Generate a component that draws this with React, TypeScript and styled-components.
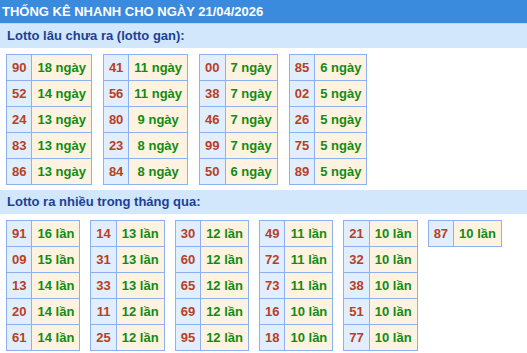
import React from "react";
import styled, { createGlobalStyle } from "styled-components";

type Pair = [string, string];

const ganTables: Pair[][] = [
  [["90", "18 ngày"], ["52", "14 ngày"], ["24", "13 ngày"], ["83", "13 ngày"], ["86", "13 ngày"]],
  [["41", "11 ngày"], ["56", "11 ngày"], ["80", "9 ngày"], ["23", "8 ngày"], ["84", "8 ngày"]],
  [["00", "7 ngày"], ["38", "7 ngày"], ["46", "7 ngày"], ["99", "7 ngày"], ["50", "6 ngày"]],
  [["85", "6 ngày"], ["02", "5 ngày"], ["26", "5 ngày"], ["75", "5 ngày"], ["89", "5 ngày"]],
];

const hotTables: Pair[][] = [
  [["91", "16 lần"], ["09", "15 lần"], ["13", "14 lần"], ["20", "14 lần"], ["61", "14 lần"]],
  [["14", "13 lần"], ["31", "13 lần"], ["33", "13 lần"], ["11", "12 lần"], ["25", "12 lần"]],
  [["30", "12 lần"], ["60", "12 lần"], ["65", "12 lần"], ["69", "12 lần"], ["95", "12 lần"]],
  [["49", "11 lần"], ["72", "11 lần"], ["73", "11 lần"], ["16", "10 lần"], ["18", "10 lần"]],
  [["21", "10 lần"], ["32", "10 lần"], ["38", "10 lần"], ["51", "10 lần"], ["77", "10 lần"]],
  [["87", "10 lần"]],
];

const GlobalStyle = createGlobalStyle`
  body {
    margin: 0;
    background: #ffffff;
    font-family: "Liberation Sans", Arial, sans-serif;
  }
`;

const Wrapper = styled.div`
  width: 527px;
  font-size: 13px;
  font-weight: bold;
`;

const TitleBar = styled.div`
  height: 23px;
  line-height: 23px;
  padding-left: 2px;
  background-color: #3a8bdd;
  color: #ffffff;
  border-bottom: 1px solid #c0d6ec;
  white-space: nowrap;
  overflow: hidden;
`;

const SectionTitle = styled.div`
  height: 24px;
  line-height: 24px;
  padding-left: 7px;
  background-color: #d3e7fc;
  color: #1a4196;
`;

const TableRow = styled.div<{ $gap: number; $last?: boolean }>`
  display: flex;
  align-items: flex-start;
  gap: ${(p) => p.$gap}px;
  padding: 6px 0 0 6px;
  margin-bottom: ${(p) => (p.$last ? "0" : "5px")};
`;

const Table = styled.table`
  border-collapse: collapse;
`;

const NumCell = styled.td`
  height: 25px;
  padding: 0 5px;
  text-align: center;
  border: 1px solid #8cb0f0;
  background-color: #e1eefe;
  color: #b7401f;
`;

const CountCell = styled.td`
  height: 25px;
  padding: 0 5px;
  text-align: center;
  border: 1px solid #8cb0f0;
  background-color: #fef3e1;
  color: #138a13;
  white-space: nowrap;
`;

const StatTable: React.FC<{ rows: Pair[] }> = ({ rows }) => (
  <Table>
    <tbody>
      {rows.map(([num, count]) => (
        <tr key={num}>
          <NumCell>{num}</NumCell>
          <CountCell>{count}</CountCell>
        </tr>
      ))}
    </tbody>
  </Table>
);

const App: React.FC = () => {
  return (
    <>
      <GlobalStyle />
      <Wrapper>
        <TitleBar>THỐNG KÊ NHANH CHO NGÀY 21/04/2026</TitleBar>
        <SectionTitle>Lotto lâu chưa ra (lotto gan):</SectionTitle>
        <TableRow $gap={11}>
          {ganTables.map((rows, i) => (
            <StatTable key={i} rows={rows} />
          ))}
        </TableRow>
        <SectionTitle>Lotto ra nhiều trong tháng qua:</SectionTitle>
        <TableRow $gap={10} $last>
          {hotTables.map((rows, i) => (
            <StatTable key={i} rows={rows} />
          ))}
        </TableRow>
      </Wrapper>
    </>
  );
};

export default App;
